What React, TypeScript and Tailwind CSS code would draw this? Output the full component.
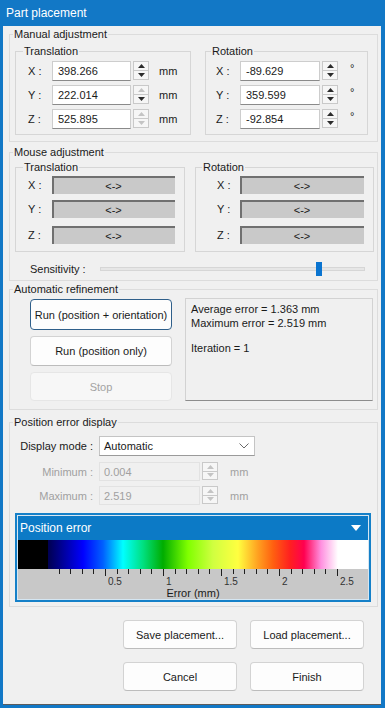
import React from "react";

const Tri: React.FC<{ up?: boolean; on: boolean }> = ({ up, on }) => (
  <svg width="7" height="4" viewBox="0 0 7 4">
    <path d={up ? "M0 4 3.5 0 7 4Z" : "M0 0 7 0 3.5 4Z"} fill={on ? "#2b2b2b" : "#c4c4c4"} />
  </svg>
);

const SpinBox: React.FC<{ up?: boolean; down?: boolean }> = ({ up = true, down = true }) => (
  <div className="ml-[2px] flex h-full w-[16px] flex-col">
    <div className="flex h-1/2 items-center justify-center border border-[#c9c9c9] bg-[#f6f6f6]">
      <Tri up on={up} />
    </div>
    <div className="-mt-px flex h-1/2 items-center justify-center border border-[#c9c9c9] bg-[#f6f6f6]">
      <Tri on={down} />
    </div>
  </div>
);

const ValueRow: React.FC<{
  axis: string;
  value: string;
  unit: string;
  inputW: string;
  unitCls: string;
  up?: boolean;
  down?: boolean;
}> = ({ axis, value, unit, inputW, unitCls, up, down }) => (
  <div className="flex h-[20px] items-center">
    <span className="w-[24px]">{axis} :</span>
    <div
      className={`flex h-full items-center border border-[#cdcdcd] border-b-[#8a8a8a] bg-white pl-[5px] ${inputW}`}
    >
      {value}
    </div>
    <SpinBox up={up} down={down} />
    <span className={unitCls}>{unit}</span>
  </div>
);

const MouseBar: React.FC = () => (
  <div className="flex h-[18px] items-center justify-center border-l-2 border-t-2 border-[#707070] bg-[#c9c9c9] pr-[2px] text-[11px]">
    &lt;-&gt;
  </div>
);

const Btn: React.FC<{ children: React.ReactNode; cls: string }> = ({ children, cls }) => (
  <div className={`flex items-center justify-center rounded-[4px] border ${cls}`}>{children}</div>
);

const normalBtn = "border-[#d3d3d3] border-b-[#bcbcbc] bg-[#fdfdfd]";

const ticks = Array.from({ length: 25 }, (_, i) => i + 1);

export default function App() {
  return (
    <div className="flex h-[708px] w-[385px] flex-col bg-[#1278c6] font-['Liberation_Sans',Arial,sans-serif] text-[11px] leading-[14px] text-[#1a1a1a]">
      <div className="flex h-[26px] shrink-0 items-center pl-[6px] text-[12px] text-white">Part placement</div>

      <div className="mb-[3px] ml-[3px] mr-[4px] flex flex-1 flex-col border-b border-[#5c5c5c] bg-[#f0f0f0]">
        {/* Manual adjustment */}
        <fieldset className="ml-[6px] mt-[1px] w-[369px] border border-[#dcdcdc] pb-[6px]">
          <legend className="ml-[3px] px-[1px]">Manual adjustment</legend>
          <div className="mt-[3px] flex">
            <fieldset className="ml-[5px] w-[176px] border border-[#d6d6d6]">
              <legend className="ml-[7px] px-[1px]">Translation</legend>
              <div className="flex flex-col gap-[4px] pb-[5px] pl-[12px] pt-[3px]">
                <ValueRow axis="X" value="398.266" unit="mm" inputW="w-[79px]" unitCls="ml-[10px]" />
                <ValueRow axis="Y" value="222.014" unit="mm" inputW="w-[79px]" unitCls="ml-[10px]" up={false} />
                <ValueRow axis="Z" value="525.895" unit="mm" inputW="w-[79px]" unitCls="ml-[10px]" up={false} down={false} />
              </div>
            </fieldset>
            <fieldset className="ml-[14px] w-[163px] border border-[#d6d6d6]">
              <legend className="ml-[5px] px-[1px]">Rotation</legend>
              <div className="flex flex-col gap-[4px] pb-[5px] pl-[10px] pt-[3px]">
                <ValueRow axis="X" value="-89.629" unit="°" inputW="w-[80px]" unitCls="ml-[12px] -mt-[6px]" />
                <ValueRow axis="Y" value="359.599" unit="°" inputW="w-[80px]" unitCls="ml-[12px] -mt-[6px]" />
                <ValueRow axis="Z" value="-92.854" unit="°" inputW="w-[80px]" unitCls="ml-[12px] -mt-[6px]" />
              </div>
            </fieldset>
          </div>
        </fieldset>

        {/* Mouse adjustment */}
        <fieldset className="ml-[6px] mt-[3px] w-[369px] border border-[#dcdcdc] pb-[4px]">
          <legend className="ml-[3px] px-[1px]">Mouse adjustment</legend>
          <div className="mt-[1px] flex">
            <fieldset className="ml-[5px] w-[170px] border border-[#d6d6d6]">
              <legend className="ml-[7px] px-[1px]">Translation</legend>
              <div className="flex flex-col pb-[7px] pl-[12px] pt-[2px]">
                {["X", "Y", "Z"].map((a, i) => (
                  <div key={a} className={`flex items-center ${i === 1 ? "mt-[6px]" : i === 2 ? "mt-[8px]" : ""}`}>
                    <span className="w-[24px]">{a} :</span>
                    <div className="w-[123px]">
                      <MouseBar />
                    </div>
                  </div>
                ))}
              </div>
            </fieldset>
            <fieldset className="ml-[10px] w-[179px] border border-[#d6d6d6]">
              <legend className="ml-[6px] px-[1px]">Rotation</legend>
              <div className="flex flex-col pb-[7px] pl-[21px] pt-[2px]">
                {["X", "Y", "Z"].map((a, i) => (
                  <div key={a} className={`flex items-center ${i === 1 ? "mt-[6px]" : i === 2 ? "mt-[8px]" : ""}`}>
                    <span className="w-[23px]">{a} :</span>
                    <div className="w-[124px]">
                      <MouseBar />
                    </div>
                  </div>
                ))}
              </div>
            </fieldset>
          </div>
          <div className="mt-[10px] flex h-[14px] items-center pl-[20px]">
            <span className="w-[70px]">Sensitivity :</span>
            <div className="relative h-[4px] w-[265px] border border-[#d6d6d6] bg-[#e6e6e6]">
              <div className="absolute left-[215px] top-[-6px] h-[14px] w-[6px] bg-[#0a74d0]" />
            </div>
          </div>
        </fieldset>

        {/* Automatic refinement */}
        <fieldset className="ml-[6px] mt-[1px] w-[369px] border border-[#dcdcdc] pb-[8px]">
          <legend className="ml-[3px] px-[1px]">Automatic refinement</legend>
          <div className="mt-[2px] flex">
            <div className="ml-[20px] flex w-[142px] flex-col pt-[1px]">
              <Btn cls="h-[31px] border-[#2f5f8a] bg-[#fdfdfd]">Run (position + orientation)</Btn>
              <Btn cls={`mt-[6px] h-[30px] ${normalBtn}`}>Run (position only)</Btn>
              <Btn cls="mt-[6px] h-[29px] border-[#e6e6e6] bg-[#f7f7f7] text-[#a3a3a3]">Stop</Btn>
            </div>
            <div className="ml-[13px] h-[103px] w-[188px] border border-[#d2d2d2] border-b-[#8c8c8c] pl-[5px] pt-[3px]">
              <div>Average error = 1.363 mm</div>
              <div>Maximum error = 2.519 mm</div>
              <div className="mt-[11px]">Iteration = 1</div>
            </div>
          </div>
        </fieldset>

        {/* Position error display */}
        <fieldset className="ml-[6px] mt-[5px] w-[369px] border border-[#dcdcdc] pb-[4px]">
          <legend className="ml-[3px] px-[1px]">Position error display</legend>
          <div className="mt-[7px] flex h-[20px] items-center">
            <span className="w-[83px] text-right">Display mode :</span>
            <div className="ml-[6px] flex h-full w-[156px] items-center justify-between border border-[#c4c4c4] border-b-[#9a9a9a] bg-white pl-[4px] pr-[5px]">
              <span>Automatic</span>
              <svg width="10" height="6" viewBox="0 0 10 6">
                <path d="M0.5 0.5 5 5 9.5 0.5" fill="none" stroke="#6a6a6a" strokeWidth="1" />
              </svg>
            </div>
          </div>
          {[
            ["Minimum :", "0.004", "mt-[6px]"],
            ["Maximum :", "2.519", "mt-[5px]"],
          ].map(([label, value, mt]) => (
            <div key={label} className={`flex h-[19px] items-center text-[#a0a0a0] ${mt}`}>
              <span className="w-[83px] text-right">{label}</span>
              <div className="ml-[6px] flex h-full w-[101px] items-center border border-[#e2e2e2] pl-[4px]">{value}</div>
              <SpinBox up={false} down={false} />
              <span className="ml-[12px]">mm</span>
            </div>
          ))}

          <div className="ml-[5px] mt-[8px] w-[356px] border-2 border-[#1580c8] bg-[#d5e6f2] p-px">
            <div className="flex h-[24px] items-center justify-between bg-[#0c7ac6] pl-[2px] pr-[7px] text-[12px] text-white">
              <span>Position error</span>
              <svg width="10" height="6" viewBox="0 0 10 6">
                <path d="M0 0 10 0 5 6Z" fill="#fff" />
              </svg>
            </div>
            <div className="flex h-[29px]">
              <div className="w-[30px] bg-black" />
              <div className="flex-1 bg-[linear-gradient(to_right,#000050_0px,#0000ff_35px,#0060ff_55px,#00ffff_75px,#00e080_95px,#00ad00_115px,#80ff00_140px,#d0ff40_165px,#ffff40_190px,#ffa020_210px,#ff6010_225px,#ff2020_242px,#ff0050_256px,#ff90e0_273px,#ffffff_290px)]" />
            </div>
            <div className="h-[30px] bg-[#c8c8c8]">
              <svg width="350" height="30" viewBox="0 0 350 30">
                {ticks.map((n) => {
                  const x = Math.round(29 + n * 11.6) + 0.5;
                  const major = n % 5 === 0;
                  return <line key={n} x1={x} y1={0} x2={x} y2={major ? 7 : 5} stroke="#1e1e1e" strokeWidth="1" />;
                })}
                {["0.5", "1", "1.5", "2", "2.5"].map((t, i) => (
                  <text
                    key={t}
                    x={Math.round(29 + (i + 1) * 58) + 3}
                    y={16}
                    fontSize="10"
                    fill="#333"
                    fontFamily="Liberation Sans, Arial, sans-serif"
                  >
                    {t}
                  </text>
                ))}
                <text x={175} y={28} fontSize="11" textAnchor="middle" fill="#1a1a1a" fontFamily="Liberation Sans, Arial, sans-serif">
                  Error (mm)
                </text>
              </svg>
            </div>
          </div>
        </fieldset>

        {/* Dialog buttons */}
        <div className="mt-[13px] flex justify-end gap-[13px] pr-[17px]">
          <Btn cls={`h-[29px] w-[114px] ${normalBtn}`}>Save placement...</Btn>
          <Btn cls={`h-[29px] w-[114px] ${normalBtn}`}>Load placement...</Btn>
        </div>
        <div className="mt-[13px] flex justify-end gap-[13px] pr-[17px]">
          <Btn cls={`h-[29px] w-[114px] ${normalBtn}`}>Cancel</Btn>
          <Btn cls={`h-[29px] w-[114px] ${normalBtn}`}>Finish</Btn>
        </div>
      </div>
    </div>
  );
}
